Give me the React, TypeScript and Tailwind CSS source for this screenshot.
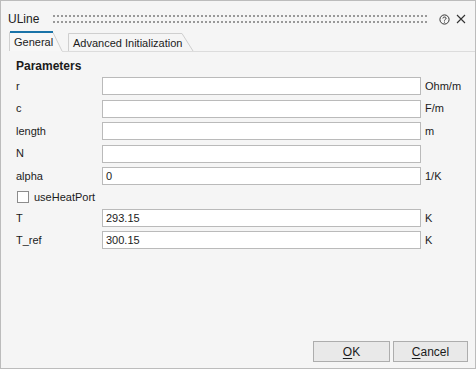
import React from 'react';

const rows: { label: string; value?: string; unit?: string }[] = [
  { label: 'r', unit: 'Ohm/m' },
  { label: 'c', unit: 'F/m' },
  { label: 'length', unit: 'm' },
  { label: 'N' },
  { label: 'alpha', value: '0', unit: '1/K' },
];

const tempRows = [
  { label: 'T', value: '293.15', unit: 'K' },
  { label: 'T_ref', value: '300.15', unit: 'K' },
];

const ParamRow = ({ label, value, unit }: { label: string; value?: string; unit?: string }) => (
  <div className="flex items-center h-[18px]">
    <div className="w-[86px]">{label}</div>
    <div className="w-[319px] h-[18px] bg-white border border-[#bababa] pl-[3px] flex items-center">
      {value}
    </div>
    <div className="pl-[4px]">{unit}</div>
  </div>
);

export default function App() {
  return (
    <div className="w-[476px] h-[369px] bg-[#f5f5f5] border border-[#bcbcbc] flex flex-col font-['Liberation_Sans',Arial,sans-serif] text-[11px] text-[#1b1b1b]">
      {/* title bar */}
      <div className="h-[30px] pt-[6px] flex items-center pl-[7px] pr-[9px]">
        <span className="text-[12px] text-[#222]">ULine</span>
        <svg className="ml-[14px]" width="376" height="9">
          <defs>
            <pattern id="grip" width="4" height="6" patternUnits="userSpaceOnUse">
              <rect x="0" y="0" width="2" height="2" fill="#999999" />
            </pattern>
          </defs>
          <rect x="0" y="0" width="376" height="8" fill="url(#grip)" />
        </svg>
        <div className="flex-1" />
        <svg width="11" height="11" viewBox="0 0 11 11" className="mr-[6px]">
          <circle cx="5.5" cy="5.5" r="4.6" fill="none" stroke="#333" strokeWidth="1" />
          <path d="M3.9 4.4 C3.9 2.6 7.1 2.6 7.1 4.3 C7.1 5.4 5.5 5.4 5.5 6.6" fill="none" stroke="#333" strokeWidth="1" />
          <rect x="5" y="7.6" width="1" height="1" fill="#333" />
        </svg>
        <svg width="10" height="10" viewBox="0 0 10 10">
          <path d="M1 1 L9 9 M9 1 L1 9" stroke="#333" strokeWidth="1.1" />
        </svg>
      </div>

      {/* tabs */}
      <div className="relative h-[21px] flex items-end pl-[8px]">
        <svg className="absolute left-0 top-0" width="474" height="21">
          <polyline points="8.5,20 8.5,1.5 52,1.5 61,20" fill="#f7f7f7" stroke="#d0d0d0" strokeWidth="1" />
          <line x1="9" y1="1" x2="52" y2="1" stroke="#1a73a8" strokeWidth="2" />
          <polyline points="67.5,20 67.5,2.5 181,2.5 192,20" fill="none" stroke="#cfcfcf" strokeWidth="1" />
          <line x1="61" y1="20.5" x2="474" y2="20.5" stroke="#dcdcdc" strokeWidth="1" />
        </svg>
        <span className="relative w-[59px] pl-[5px] h-[20px] flex items-center text-[11px]">General</span>
        <span className="relative pl-[5px] h-[20px] pt-[2px] flex items-center text-[11px]">Advanced Initialization</span>
      </div>

      {/* content */}
      <div className="flex-1 flex flex-col pl-[15px]">
        <div className="mt-[7px] font-bold text-[12px] leading-[14px]">Parameters</div>
        <div className="mt-[4px] flex flex-col gap-[4.5px]">
          {rows.map((r) => (
            <ParamRow key={r.label} {...r} />
          ))}
        </div>
        <div className="mt-[3px] h-[18px] flex items-center pl-[1px]">
          <div className="w-[12px] h-[12px] bg-white border border-[#8c8c8c]" />
          <span className="ml-[5px]">useHeatPort</span>
        </div>
        <div className="mt-[3px] flex flex-col gap-[4px]">
          {tempRows.map((r) => (
            <ParamRow key={r.label} {...r} />
          ))}
        </div>
        <div className="flex-1" />
        <div className="flex justify-end gap-[3px] pr-[7px] mb-[6px]">
          <button className="w-[77px] h-[21px] bg-[#e9e9e9] border border-[#adadad] text-[12px]">
            <span className="underline underline-offset-2">O</span>K
          </button>
          <button className="w-[75px] h-[21px] bg-[#e9e9e9] border border-[#adadad] text-[12px]">
            <span className="underline underline-offset-2">C</span>ancel
          </button>
        </div>
      </div>
    </div>
  );
}
